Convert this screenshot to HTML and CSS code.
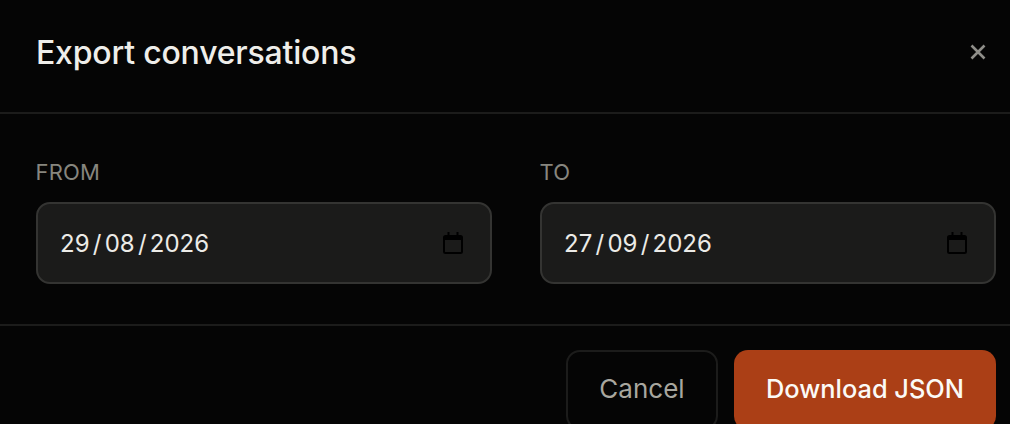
FILE: index.html
```html
<!DOCTYPE html>
<html lang="en">
<head>
<meta charset="utf-8">
<title>Export conversations</title>
<link rel="stylesheet" href="styles.css">
</head>
<body>
<div class="dialog">
  <header class="head">
    <h1 class="title">Export conversations</h1>
    <button class="close" aria-label="Close">
      <svg width="16" height="16" viewBox="0 0 16 16"><path d="M1.500 1.500 14.500 14.500M14.500 1.500 1.500 14.500" fill="none" stroke="#8f8e89" stroke-width="2.600"/></svg>
    </button>
  </header>
  <section class="fields">
    <div class="field">
      <div class="label">FROM</div>
      <div class="input">
        <span class="date"><span>29</span><i>/</i><span>08</span><i>/</i><span>2026</span></span>
        <svg class="cal" width="20" height="22" viewBox="0 0 20 22"><path d="M2.500 4H17.500Q19 4 19 5.500V19.500Q19 21 17.500 21H2.500Q1 21 1 19.500V5.500Q1 4 2.500 4ZM5.500 0V4M14.500 0V4" fill="none" stroke="#000" stroke-width="2"/><rect x="1" y="4" width="18" height="4" fill="#000"/></svg>
      </div>
    </div>
    <div class="field">
      <div class="label">TO</div>
      <div class="input">
        <span class="date"><span>27</span><i>/</i><span>09</span><i>/</i><span>2026</span></span>
        <svg class="cal" width="20" height="22" viewBox="0 0 20 22"><path d="M2.500 4H17.500Q19 4 19 5.500V19.500Q19 21 17.500 21H2.500Q1 21 1 19.500V5.500Q1 4 2.500 4ZM5.500 0V4M14.500 0V4" fill="none" stroke="#000" stroke-width="2"/><rect x="1" y="4" width="18" height="4" fill="#000"/></svg>
      </div>
    </div>
  </section>
  <footer class="foot">
    <button class="btn cancel">Cancel</button>
    <button class="btn primary">Download JSON</button>
  </footer>
</div>
</body>
</html>
```
FILE: styles.css
```css
* { box-sizing: border-box; }
html, body { margin: 0; height: 424px; overflow: hidden; background: #050505; }
body { font-family: Inter, "Liberation Sans", sans-serif; color: #ecebe7; }
.dialog { width: 1010px; }
.head {
  height: 114px;
  padding: 0 24px 8px 36px;
  border-bottom: 2px solid #1c1c1b;
  display: flex;
  align-items: center;
  justify-content: space-between;
}
.title { margin: 0; font-size: 32px; font-weight: 500; letter-spacing: -0.2px; color: #efeeea; }
.close { background: none; border: 0; padding: 0; width: 16px; height: 16px; display: flex; }
.fields {
  height: 212px;
  padding: 44px 14px 0 36px;
  display: grid;
  grid-template-columns: 456px 456px;
  column-gap: 48px;
  align-content: start;
  border-bottom: 2px solid #1c1c1b;
}
.label { font-size: 22px; line-height: 28px; letter-spacing: 0.2px; text-indent: -0.5px; color: #87867f; margin-bottom: 16px; }
.input {
  height: 82px;
  border: 2px solid #343432;
  border-radius: 14px;
  background: #1b1b1a;
  padding: 0 27px 0 22px;
  display: flex;
  align-items: center;
  justify-content: space-between;
}
.date { font-size: 24px; color: #ecebe7; display: flex; }
.date i { font-style: normal; padding: 0 3.250px; }
.cal { display: block; }
.foot {
  padding: 24px 14px 0 0;
  display: flex;
  justify-content: flex-end;
  gap: 16px;
}
.btn { height: 80px; padding: 0 0 4px; border-radius: 14px; font-family: Inter, sans-serif; font-size: 26px; }
.cancel { width: 152px; background: transparent; border: 2px solid #1c1c1b; color: #a8a79f; }
.primary { width: 262px; background: #ab3f16; border: 0; color: #fbfaf7; font-size: 25.400px; font-weight: 500; }
```
